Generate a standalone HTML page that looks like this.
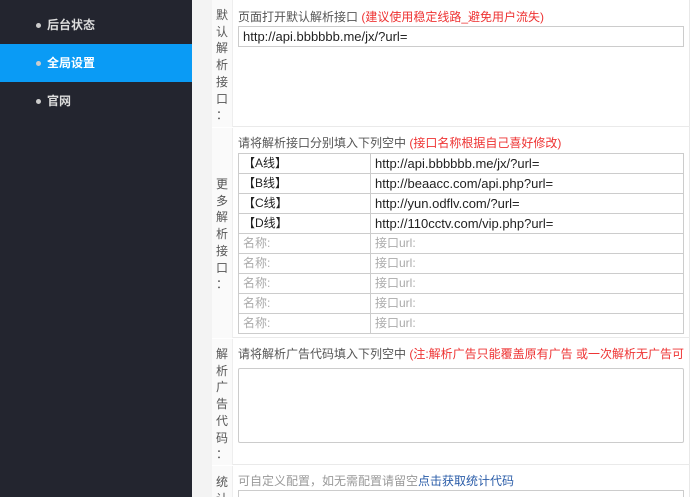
<!DOCTYPE html><html style="overflow:hidden;width:700px;height:497px"><head><meta charset="utf-8"><style>
*{margin:0;padding:0;box-sizing:border-box}
body{width:700px;height:497px;overflow:hidden;background:#fff;font-family:"Liberation Sans","Noto Sans CJK SC",sans-serif;position:relative;font-size:12px;color:#333}
.sb{position:absolute;left:0;top:0;width:192px;height:497px;background:#23252f}
.it{position:absolute;left:0;width:192px;height:38px;line-height:38px;color:#ddd;font-weight:bold;font-size:12px;padding-left:47px}
.it:before{content:"";position:absolute;left:36px;top:17px;width:5px;height:5px;border-radius:50%;background:#ccc}
.act{background:#0a9bf5;color:#fff}
.gap{position:absolute;left:192px;top:0;width:20px;height:497px;background:#f3f3f3}
.lab{position:absolute;left:212px;width:21px;background:#fafafa;border-right:1px solid #eee;text-align:center;color:#555;font-size:12px;line-height:16.7px;overflow:hidden}
.sec{position:absolute;left:212px;width:478px;border-bottom:1px solid #eaeaea}
.t{position:absolute;left:238px;font-size:12px;color:#555;white-space:nowrap}
.r{color:#e33}
.inp{position:absolute;border:1px solid #ccc;background:#fff;height:21px;line-height:19px;padding-left:4px;font-size:12px;color:#222;white-space:nowrap;overflow:hidden}
.ph{color:#aaa}
.rb{position:absolute;left:689px;top:0;width:1px;height:497px;background:#e8e8e8}
.wrap{position:absolute;left:0;top:0;width:700px;height:497px;overflow:hidden}
</style></head><body><div class="wrap">
<div class="sb">
<div class="it" style="top:6px">后台状态</div>
<div class="it act" style="top:44px">全局设置</div>
<div class="it" style="top:82px">官网</div>
</div>
<div class="gap"></div>
<div class="rb"></div>
<div class="sec" style="top:0;height:127px"></div>
<div class="sec" style="top:127px;height:211px"></div>
<div class="sec" style="top:338px;height:127px"></div>
<div class="lab" style="top:0;height:127px;padding-top:7px">默<br>认<br>解<br>析<br>接<br>口<br>：</div>
<div class="lab" style="top:128px;height:210px;padding-top:48px">更<br>多<br>解<br>析<br>接<br>口<br>：</div>
<div class="lab" style="top:339px;height:126px;padding-top:7px">解<br>析<br>广<br>告<br>代<br>码<br>：</div>
<div class="lab" style="top:466px;height:31px;padding-top:8px">统<br>计</div>
<div class="t" style="top:8px">页面打开默认解析接口 <span class="r">(建议使用稳定线路_避免用户流失)</span></div>
<div class="inp" style="left:238px;top:26px;width:446px;font-size:13px">http://api.bbbbbb.me/jx/?url=</div>
<div class="t" style="top:134px">请将解析接口分别填入下列空中 <span class="r">(接口名称根据自己喜好修改)</span></div>
<div class="inp" style="left:238px;top:153px;width:133px">【A线】</div><div class="inp" style="left:370px;top:153px;width:314px;font-size:13px">http://api.bbbbbb.me/jx/?url=</div>
<div class="inp" style="left:238px;top:173px;width:133px">【B线】</div><div class="inp" style="left:370px;top:173px;width:314px;font-size:13px">http://beaacc.com/api.php?url=</div>
<div class="inp" style="left:238px;top:193px;width:133px">【C线】</div><div class="inp" style="left:370px;top:193px;width:314px;font-size:13px">http://yun.odflv.com/?url=</div>
<div class="inp" style="left:238px;top:213px;width:133px">【D线】</div><div class="inp" style="left:370px;top:213px;width:314px;font-size:13px">http://110cctv.com/vip.php?url=</div>
<div class="inp ph" style="left:238px;top:233px;width:133px">名称:</div><div class="inp ph" style="left:370px;top:233px;width:314px">接口url:</div>
<div class="inp ph" style="left:238px;top:253px;width:133px">名称:</div><div class="inp ph" style="left:370px;top:253px;width:314px">接口url:</div>
<div class="inp ph" style="left:238px;top:273px;width:133px">名称:</div><div class="inp ph" style="left:370px;top:273px;width:314px">接口url:</div>
<div class="inp ph" style="left:238px;top:293px;width:133px">名称:</div><div class="inp ph" style="left:370px;top:293px;width:314px">接口url:</div>
<div class="inp ph" style="left:238px;top:313px;width:133px">名称:</div><div class="inp ph" style="left:370px;top:313px;width:314px">接口url:</div>
<div class="t" style="top:345px;width:446px;overflow:hidden">请将解析广告代码填入下列空中 <span class="r">(注:解析广告只能覆盖原有广告 或一次解析无广告可以添加)</span></div>
<div class="inp" style="left:238px;top:368px;width:446px;height:75px;border-radius:2px"></div>
<div class="t" style="top:472px;color:#999">可自定义配置，如无需配置请留空<span style="color:#2a5ca8">点击获取统计代码</span></div>
<div class="inp" style="left:238px;top:490px;width:446px;height:20px"></div>
</div></body></html>
